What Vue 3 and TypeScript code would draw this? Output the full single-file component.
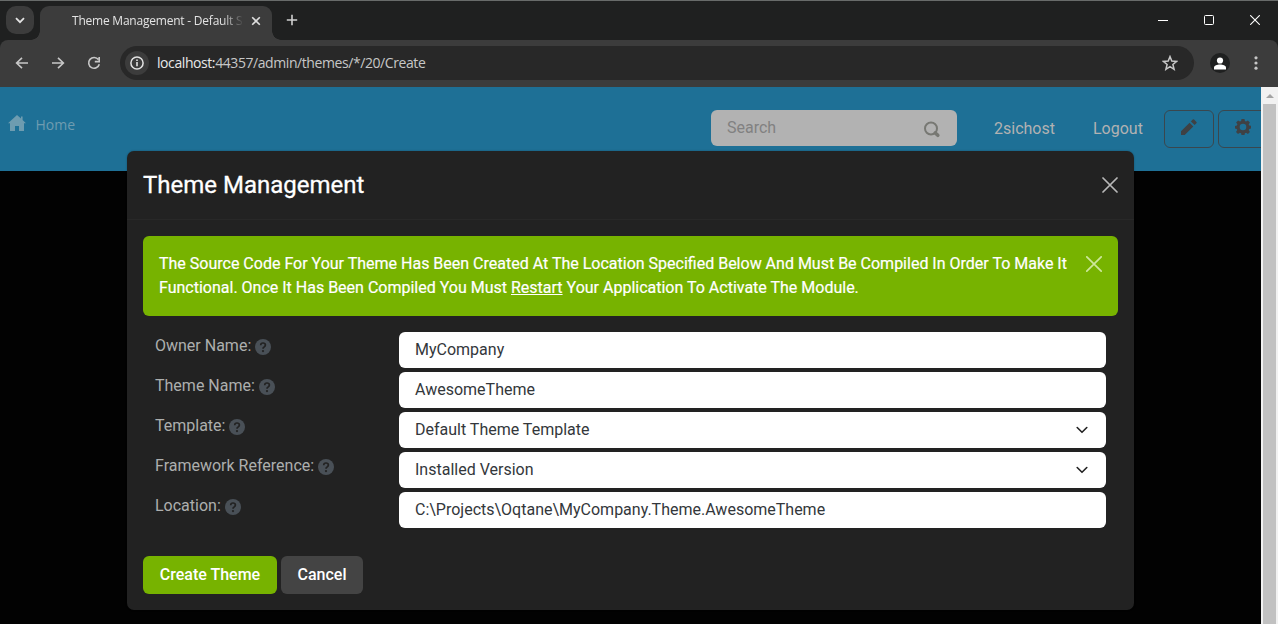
<script setup lang="ts">
interface Field {
  label: string
  value: string
  select?: boolean
}

const fields: Field[] = [
  { label: 'Owner Name:', value: 'MyCompany' },
  { label: 'Theme Name:', value: 'AwesomeTheme' },
  { label: 'Template:', value: 'Default Theme Template', select: true },
  { label: 'Framework Reference:', value: 'Installed Version', select: true },
  { label: 'Location:', value: 'C:\\Projects\\Oqtane\\MyCompany.Theme.AwesomeTheme' },
]
</script>

<template>
  <div class="window">
    <header class="tabstrip">
      <button class="tab-search" aria-label="Search tabs">
        <svg width="10" height="7" viewBox="0 0 10 7"><path d="M1 1.2 5 5.2 9 1.2" fill="none" stroke="#e3e3e3" stroke-width="1.8" /></svg>
      </button>
      <div class="tab">
        <span class="tab-title">Theme Management - Default S</span>
        <svg class="tab-close" width="10" height="10" viewBox="0 0 10 10"><path d="m1.2 1.2 7.6 7.6M8.8 1.2 1.2 8.8" stroke="#dedede" stroke-width="1.6" /></svg>
      </div>
      <svg class="new-tab" width="12" height="12" viewBox="0 0 12 12"><path d="M6 .8v10.4M.8 6h10.4" stroke="#d0d0d0" stroke-width="1.6" /></svg>
      <div class="win-controls">
        <svg width="10" height="10" viewBox="0 0 10 10"><path d="M0 5.5h10" stroke="#fff" /></svg>
        <svg width="10" height="10" viewBox="0 0 10 10"><rect x=".5" y=".5" width="9" height="9" rx="1" fill="none" stroke="#fff" /></svg>
        <svg width="10" height="10" viewBox="0 0 10 10"><path d="m.2.2 9.6 9.6M9.8.2.2 9.8" stroke="#fff" stroke-width="1.1" /></svg>
      </div>
    </header>

    <nav class="toolbar">
      <svg class="nav-icon" width="14" height="12" viewBox="0 0 14 12"><path d="M13 6H1.8M7 .8 1.6 6 7 11.2" fill="none" stroke="#c7c7c7" stroke-width="1.6" /></svg>
      <svg class="nav-icon" width="14" height="12" viewBox="0 0 14 12"><path d="M1 6h11.2M7 .8 12.4 6 7 11.2" fill="none" stroke="#c7c7c7" stroke-width="1.6" /></svg>
      <svg class="nav-icon" width="14" height="14" viewBox="0 0 14 14"><path d="M11.400 3.600A5.400 5.400 0 1 0 12.300 8.300M12.200 1v4.600H7.800" fill="none" stroke="#c7c7c7" stroke-width="1.6" /></svg>
      <div class="omnibox">
        <span class="site-info">
          <svg width="14" height="14" viewBox="0 0 14 14"><circle cx="7" cy="7" r="6.1" fill="none" stroke="#e3e3e3" stroke-width="1.5" /><path d="M7 6.1v4.2M7 3.5v1.6" stroke="#e3e3e3" stroke-width="1.6" /></svg>
        </span>
        <span class="url"><b>localhost:</b>44357/admin/themes/*/20/Create</span>
        <svg class="star" width="16" height="16" viewBox="0 0 16 16"><path d="m8 1.6 1.8 4.5 4.8.3-3.7 3.1 1.2 4.8L8 11.7l-4.1 2.6 1.2-4.8-3.7-3.1 4.8-.3z" fill="none" stroke="#c7c7c7" stroke-width="1.5" /></svg>
      </div>
      <span class="avatar">
        <svg width="12" height="13" viewBox="0 0 12 13"><circle cx="6" cy="3.5" r="3.1" fill="#fff" /><path d="M0 12.500v-2C0 8.700 3.200 7.500 6 7.500s6 1.200 6 3v2z" fill="#fff" /></svg>
      </span>
      <svg class="menu" width="4" height="14" viewBox="0 0 4 14"><g fill="#c7c7c7"><circle cx="2" cy="1.8" r="1.6" /><circle cx="2" cy="7" r="1.6" /><circle cx="2" cy="12.2" r="1.6" /></g></svg>
    </nav>

    <main class="page">
      <div class="content">
        <div class="site-header">
          <svg class="home-icon" width="18" height="16" viewBox="0 0 18 16"><path d="M9 0 0 8.200h2V16h5v-5h4v5h5V8.200h2L14.600 5V1.500H13v2.100z" fill="#6e9cb0" /></svg>
          <span class="home">Home</span>
          <div class="search">
            <span>Search</span>
            <svg width="18" height="17" viewBox="0 0 18 17"><circle cx="8" cy="7.500" r="6" fill="none" stroke="#777873" stroke-width="2" /><path d="m12.300 12 2.500 2.300" stroke="#777873" stroke-width="3.600" stroke-linecap="round" /></svg>
          </div>
          <span class="user">2sichost</span>
          <span class="logout">Logout</span>
          <button class="tool" aria-label="Edit">
            <svg width="16" height="16" viewBox="0 0 16 16"><path d="M0 12.300 8.600 3.700l3.700 3.700L3.700 16H0zM9.900 2.400 11.700.6q.7-.7 1.400 0l2.300 2.300q.7.7 0 1.400l-1.800 1.800z" fill="#3f4144" /></svg>
          </button>
          <button class="tool" aria-label="Settings">
            <svg width="16" height="16" viewBox="0 0 16 16"><path fill-rule="evenodd" d="M6.500 0h3l.4 2.100 1.100.5 1.900-1.200 2 2-1.200 1.900.5 1.200 2 .4v2.600l-2 .5-.5 1.100 1.200 1.900-2 2-1.800-1.200-1.200.5L9.500 16h-3l-.4-1.800-1.200-.5L3 15l-2-2 1.300-1.900-.5-1.100L0 9.600V6.900l1.900-.4.500-1.200L1.100 3.400l2-2L5 2.600l1.100-.5zM8 4.700a3.300 3.300 0 1 0 0 6.600 3.300 3.300 0 0 0 0-6.600z" fill="#3f4144" /></svg>
          </button>
        </div>

        <section class="modal">
          <div class="modal-header">
            <h5>Theme Management</h5>
            <svg width="16" height="16" viewBox="0 0 16 16"><path d="m1 1 14 14M15 1 1 15" stroke="#b8b8b8" stroke-width="1.7" stroke-linecap="round" /></svg>
          </div>
          <div class="modal-body">
            <div class="alert">
              <p>
                <span class="line">The Source Code For Your Theme Has Been Created At The Location Specified Below And Must Be Compiled In Order To Make It</span>
                <span class="line">Functional. Once It Has Been Compiled You Must <u>Restart</u> Your Application To Activate The Module.</span>
              </p>
              <svg width="16" height="16" viewBox="0 0 16 16"><path d="m.8.8 14.400 14.400M15.200.8.8 15.200" stroke="#cde79b" stroke-width="1.7" stroke-linecap="round" /></svg>
            </div>
            <div class="form">
              <div v-for="f in fields" :key="f.label" class="row">
                <label>{{ f.label }}<svg class="help" width="16" height="16" viewBox="0 0 16 16"><circle cx="8" cy="8" r="8" fill="#495057" /><path d="M5.700 6.200Q5.700 4 8 4t2.400 2q0 1.100-1.200 1.900Q8 8.600 8 9.700" fill="none" stroke="#222" stroke-width="1.700" /><circle cx="8" cy="12.100" r="1.100" fill="#222" /></svg></label>
                <div class="control">
                  <span>{{ f.value }}</span>
                  <svg v-if="f.select" width="12" height="8" viewBox="0 0 12 8"><path d="m1.200 1.500 4.800 4.800 4.800-4.800" fill="none" stroke="#222" stroke-width="1.6" stroke-linecap="round" stroke-linejoin="round" /></svg>
                </div>
              </div>
            </div>
            <div class="actions">
              <button class="btn primary">Create Theme</button>
              <button class="btn secondary">Cancel</button>
            </div>
          </div>
        </section>
      </div>
      <div class="scrollbar">
        <svg width="8" height="4" viewBox="0 0 8 4"><path d="M0 4 4 0l4 4z" fill="#a3a3a3" /></svg>
        <div class="thumb"></div>
      </div>
    </main>
  </div>
</template>

<style>
body {
  margin: 0;
  overflow: hidden;
}
</style>

<style scoped>
* {
  box-sizing: border-box;
}
svg {
  display: block;
  flex: none;
}
button {
  font: inherit;
  padding: 0;
}
.window {
  width: 1278px;
  height: 624px;
  display: flex;
  flex-direction: column;
  overflow: hidden;
  background: #1f2020;
  font-family: Roboto, "Liberation Sans", sans-serif;
  font-size: 16px;
  line-height: 24px;
}
.tabstrip {
  height: 40px;
  flex: none;
  display: flex;
  align-items: flex-start;
  border-top: 1px solid #686b6a;
  background: #1f2020;
}
.tab-search {
  width: 28px;
  height: 28px;
  margin: 5px 6px 0;
  display: flex;
  align-items: center;
  justify-content: center;
  border: 0;
  border-radius: 10px;
  background: #3c3c3c;
}
.tab {
  position: relative;
  width: 232px;
  height: 34px;
  margin-top: 5px;
  padding: 0 11px 4px 32px;
  display: flex;
  align-items: center;
  justify-content: space-between;
  border-radius: 9px 9px 0 0;
  background: #3c3c3c;
}
.tab::before,
.tab::after {
  content: "";
  position: absolute;
  bottom: 0;
  width: 9px;
  height: 9px;
}
.tab::before {
  left: -9px;
  background: radial-gradient(circle at 0 0, transparent 8.5px, #3c3c3c 9px);
}
.tab::after {
  right: -9px;
  background: radial-gradient(circle at 100% 0, transparent 8.5px, #3c3c3c 9px);
}
.tab-title {
  width: 172px;
  white-space: nowrap;
  color: #e3e3e3;
  font-family: "Open Sans", "Noto Sans", sans-serif;
  font-size: 12px;
  letter-spacing: -0.22px;
  mask-image: linear-gradient(90deg, #000 150px, transparent 172px);
}
.new-tab {
  margin: 13px 0 0 14px;
}
.win-controls {
  display: flex;
  gap: 36px;
  margin: 14px 18px 0 auto;
}
.toolbar {
  height: 47px;
  flex: none;
  display: flex;
  align-items: center;
  padding: 0 20px 1px 15px;
  border-radius: 8px 8px 0 0;
  background: #3c3c3c;
}
.nav-icon {
  margin-right: 22px;
}
.nav-icon + .nav-icon + .nav-icon {
  margin-right: 19px;
}
.omnibox {
  width: 1074px;
  height: 34px;
  display: flex;
  align-items: center;
  padding: 0 16px 0 5px;
  border-radius: 17px;
  background: #282828;
}
.site-info {
  width: 24px;
  height: 24px;
  display: flex;
  align-items: center;
  justify-content: center;
  border-radius: 50%;
  background: #3c3c3c;
}
.url {
  margin-left: 8px;
  color: #c7c7c7;
  font-family: "Open Sans", "Noto Sans", sans-serif;
  font-size: 14px;
  letter-spacing: -0.42px;
}
.url b {
  color: #e8e8e8;
  font-weight: 400;
}
.star {
  margin-left: auto;
}
.avatar {
  width: 20px;
  height: 20px;
  display: flex;
  align-items: center;
  justify-content: center;
  margin: 0 0 0 16px;
  border-radius: 50%;
  background: #1f2020;
}
.menu {
  margin-left: auto;
}
.page {
  flex: 1;
  display: flex;
  min-height: 0;
  background: #020202;
}
.content {
  position: relative;
  width: 1261px;
  overflow: hidden;
}
.site-header {
  height: 84px;
  display: flex;
  align-items: flex-start;
  padding-left: 8px;
  background: #1e7096;
  color: #b2b2b2;
}
.home-icon {
  margin-top: 28px;
}
.home {
  width: 80px;
  flex: none;
  margin: 26px 0 0 9.5px;
  color: #6e9cb0;
  font-family: "Open Sans", "Noto Sans", sans-serif;
  font-size: 14px;
}
.search {
  width: 246px;
  height: 36px;
  flex: none;
  display: flex;
  align-items: center;
  justify-content: space-between;
  margin: 23px 0 0 595.5px;
  padding: 0 16px;
  border-radius: 6px;
  background: #b2b2b2;
  color: #818181;
}
.search svg {
  margin-top: 2px;
}
.user {
  margin: 30px 0 0 37px;
}
.logout {
  margin: 30px 21px 0 38px;
}
.tool {
  width: 50px;
  height: 38px;
  flex: none;
  display: flex;
  justify-content: center;
  margin: 23px 4px 0 0;
  padding-top: 8px;
  border: 1px solid #3a474e;
  border-radius: 6px;
  background: transparent;
}
.modal {
  position: absolute;
  left: 127px;
  top: 64px;
  width: 1007px;
  height: 459px;
  border-radius: 7px;
  background: #222;
  box-shadow: 0 0 2px rgba(0, 0, 0, 0.3);
}
.modal-header {
  height: 69px;
  display: flex;
  justify-content: space-between;
  align-items: center;
  padding: 0 16px;
  border-bottom: 1px solid #282828;
}
h5 {
  margin: 0;
  color: #fff;
  font-size: 24px;
  font-weight: 400;
  line-height: 36px;
  -webkit-text-stroke: 0.3px #fff;
}
.modal-body {
  padding: 16px;
}
.alert {
  height: 80px;
  display: flex;
  justify-content: space-between;
  padding: 16px;
  border-radius: 6px;
  background: #77b300;
  color: #fff;
  -webkit-text-stroke: 0.2px #fff;
}
.alert p {
  margin: 0;
}
.alert > svg {
  margin-top: 4px;
}
.line {
  display: block;
  white-space: nowrap;
}
.form {
  display: flex;
  flex-direction: column;
  gap: 4px;
  padding: 16px 12px 0;
}
.row {
  display: flex;
  height: 36px;
}
label {
  width: 244px;
  display: flex;
  align-items: flex-start;
  gap: 4px;
  padding-top: 2px;
  color: #adafae;
}
.help {
  margin-top: 5px;
}
.control {
  width: 707px;
  display: flex;
  align-items: center;
  justify-content: space-between;
  padding: 0 18px 0 16px;
  border-radius: 6px;
  background: #fff;
  color: #33373b;
}
.actions {
  display: flex;
  gap: 4px;
  margin-top: 28px;
}
.btn {
  height: 38px;
  border: 0;
  border-radius: 6px;
  color: #fff;
  font-weight: 500;
}
.primary {
  width: 134px;
  background: #77b300;
}
.secondary {
  width: 82px;
  background: #444;
}
.scrollbar {
  width: 17px;
  display: flex;
  flex-direction: column;
  align-items: center;
  padding-top: 7px;
  background: #f1f1f1;
}
.thumb {
  width: 13px;
  flex: 1;
  margin-top: 6px;
  background: #c1c1c1;
}
</style>
